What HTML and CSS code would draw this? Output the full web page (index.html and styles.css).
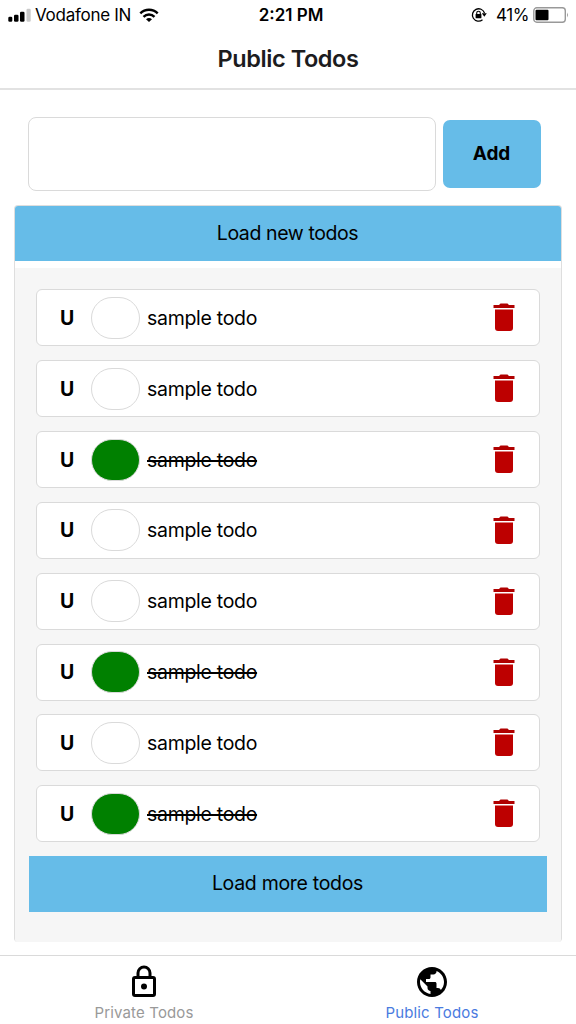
FILE: index.html
```html
<!DOCTYPE html>
<html lang="en">
<head>
<meta charset="utf-8">
<title>Public Todos</title>
<link rel="stylesheet" href="styles.css">
<script src="app.js" defer></script>
</head>
<body>
<svg class="defs" aria-hidden="true">
  <symbol id="trash" viewBox="0 0 22 28">
    <path fill="#b00000" d="M.5 2H6L7.500 .5h7l1.500 1.500h5.500V5H.5z"/>
    <path fill="#bd0000" d="M2 6.500h18V25a3 3 0 0 1-3 3H5a3 3 0 0 1-3-3z"/>
  </symbol>
</svg>
<div class="status">
  <div class="status-left">
    <svg class="signal" viewBox="0 0 23 14"><rect x="0.300" y="8.800" width="4" height="5" rx="1.300"/><rect x="6" y="6.800" width="4.500" height="7" rx="1.300"/><rect x="12" y="3.800" width="4.500" height="10" rx="1.300"/><rect x="18.500" y=".8" width="4.200" height="13" rx="1.300" fill="#c9c9c9"/></svg>
    <span class="carrier">Vodafone IN</span>
    <svg class="wifi" viewBox="0 0 20 14"><g fill="none" stroke="#000" stroke-width="2.500"><path d="M1.300 5.300a12.500 12.500 0 0 1 17.400 0"/><path d="M4.500 8.800a8 8 0 0 1 11 0"/></g><path d="M7 11.300a4.500 4.500 0 0 1 6 0L10 14z"/></svg>
  </div>
  <span class="time">2:21 PM</span>
  <div class="status-right">
    <svg class="rotation" viewBox="0 0 16 16"><path d="M13.500 6A6.200 6.200 0 1 0 11.500 12.800" fill="none" stroke="#000" stroke-width="1.300"/><path d="M10.800 6.300h5L13.300 9.800z"/><rect x="4.600" y="7" width="5.800" height="4.300" rx=".6"/><path d="M5.700 7.300V6a1.800 1.800 0 0 1 3.600 0v1.300" fill="none" stroke="#000" stroke-width="1.100"/></svg>
    <span class="percent">41%</span>
    <svg class="battery" viewBox="0 0 36 16"><rect x=".8" y=".8" width="31.500" height="14.400" rx="3" fill="#fff" stroke="#999" stroke-width="1.400"/><rect x="2.500" y="2.700" width="13" height="10.600" rx="1"/><path d="M34 5.500q1.800 2.500 0 5z" fill="#888"/></svg>
  </div>
</div>
<header class="header"><h1 class="title">Public Todos</h1></header>
<main class="main">
  <form class="entry">
    <input class="field" type="text" aria-label="New todo">
    <button class="add" type="button">Add</button>
  </form>
  <section class="panel">
    <button class="load load-new" type="button"><span>Load new todos</span></button>
    <div class="list-area">
      <ul class="list" id="list"></ul>
      <button class="load load-more" type="button"><span>Load more todos</span></button>
    </div>
  </section>
</main>
<nav class="tabs">
  <a class="tab"><svg class="tab-icon" viewBox="0 0 24 24"><path d="M12 17a2 2 0 1 1 0-4 2 2 0 0 1 0 4M18 20V10H6V20H18M18 8A2 2 0 0 1 20 10V20A2 2 0 0 1 18 22H6A2 2 0 0 1 4 20V10A2 2 0 0 1 6 8H7V6A5 5 0 0 1 17 6V8H18M12 3A3 3 0 0 0 9 6V8H15V6A3 3 0 0 0 12 3Z"/></svg><span>Private Todos</span></a>
  <a class="tab tab-active"><svg class="tab-icon" viewBox="0 0 24 24"><path d="M12 2C6.480 2 2 6.480 2 12s4.480 10 10 10 10-4.480 10-10S17.520 2 12 2zm-1 17.930c-3.950-.49-7-3.850-7-7.930 0-.62.08-1.210.21-1.790L9 15v1c0 1.100.9 2 2 2v1.930zm6.900-2.540c-.26-.81-1-1.390-1.900-1.390h-1v-3c0-.55-.45-1-1-1H8v-2h2c.55 0 1-.45 1-1V7h2c1.100 0 2-.9 2-2v-.41c2.930 1.190 5 4.060 5 7.410 0 2.080-.8 3.970-2.100 5.390z"/></svg><span>Public Todos</span></a>
</nav>
</body>
</html>
```
FILE: styles.css
```css
* { box-sizing: border-box; }
body {
  margin: 0;
  width: 576px;
  height: 1024px;
  overflow: hidden;
  display: flex;
  flex-direction: column;
  background: #fff;
  color: #000;
  font-family: Inter, "Liberation Sans", sans-serif;
}
button, input { font: inherit; color: inherit; margin: 0; }
svg { display: block; flex: none; }
.defs { display: none; }

.status {
  height: 30px;
  display: grid;
  grid-template-columns: 1fr auto 1fr;
  align-items: center;
  padding: 0 7px 0 8px;
  font-size: 17px;
  line-height: 30px;
}
.status-left, .status-right { display: flex; align-items: center; }
.status-right { justify-content: flex-end; }
.signal { width: 23px; height: 14px; }
.carrier { margin-left: 4px; width: 96px; letter-spacing: -0.27px; white-space: nowrap; }
.wifi { width: 20px; height: 14px; margin-left: 8px; }
.time { font-weight: 600; padding-left: 5px; }
.rotation { width: 16px; height: 16px; }
.percent { margin-left: 9px; width: 33px; letter-spacing: -0.4px; white-space: nowrap; }
.battery { width: 36px; height: 16px; margin-left: 4px; }

.header {
  height: 60px;
  border-bottom: 2px solid #e2e2e2;
  display: flex;
  justify-content: center;
  align-items: center;
}
.title { margin: 0; font-size: 23.5px; font-weight: 600; letter-spacing: -0.42px; line-height: 28px; color: #1c1c1e; }

.main { flex: 1; padding: 27px 14px 0; }
.entry { display: flex; align-items: center; gap: 7px; margin: 0 0 14px 14px; }
.field {
  width: 408px;
  height: 74px;
  border: 1px solid #dadada;
  border-radius: 8px;
  background: #fff;
}
.add {
  width: 98px;
  height: 68px;
  padding: 0 1px 2px 0;
  border: 0;
  border-radius: 7px;
  background: #66bce8;
  font-size: 19px;
  font-weight: 700;
}
.panel {
  height: 737px;
  border: 1px solid #dedede;
  border-bottom: 0;
  border-radius: 4px;
  overflow: hidden;
}
.load {
  display: block;
  height: 56px;
  padding: 0 1px 2px 0;
  border: 0;
  background: #66bce8;
  font-size: 19.5px;
  letter-spacing: -0.3px;
}
.load-new { width: 100%; height: 55px; margin-bottom: 7px; letter-spacing: -0.4px; }
.list-area { background: #f6f6f6; height: 674px; padding: 21.4px 14px 0; }
.list { list-style: none; margin: 0 7px 14px; padding: 0; display: grid; gap: 13.85px; }
.todo {
  height: 57px;
  display: flex;
  align-items: center;
  border: 1px solid #dadada;
  border-radius: 6px;
  background: #fff;
  padding: 0 24.5px 0 23px;
  font-size: 19.5px;
}
.user { width: 31px; font-weight: 700; }
.check {
  width: 49px;
  height: 42px;
  border: 1px solid #dadada;
  border-radius: 21px;
  background: #fff;
}
.done .check { background: #008000; }
.label { margin-left: 7px; flex: 1; letter-spacing: -0.3px; }
.done .label span { text-decoration: line-through; text-decoration-thickness: 2px; }
.trash { width: 22px; height: 28px; margin-bottom: 1px; }
.load-more { width: 518px; }

.tabs {
  height: 69px;
  border-top: 1px solid #dadada;
  display: grid;
  grid-template-columns: 1fr 1fr;
}
.tab {
  display: flex;
  flex-direction: column;
  align-items: center;
  padding-top: 8px;
  font-size: 15px;
  letter-spacing: 0.15px;
  line-height: 18px;
  color: #999;
}
.tab-active { color: #4a7be0; }
.tab-icon { width: 36px; height: 36px; margin-bottom: 4px; fill: #000; }
```
FILE: app.js
```js
const todos = [false, false, true, false, false, true, false, true];
document.getElementById("list").innerHTML = todos.map(done => `
  <li class="todo${done ? " done" : ""}">
    <span class="user">U</span>
    <span class="check"></span>
    <span class="label"><span>sample todo</span></span>
    <svg class="trash"><use href="#trash"/></svg>
  </li>`).join("");
```
